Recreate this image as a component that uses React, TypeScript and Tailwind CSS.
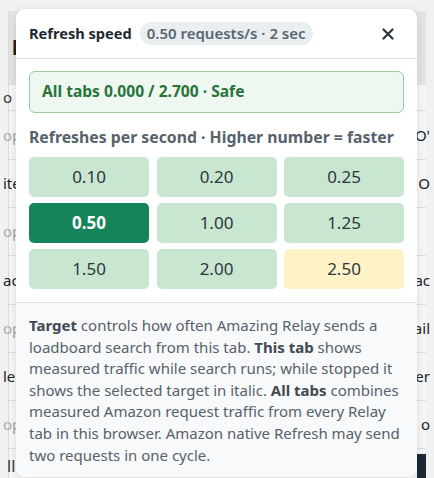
import React from "react";

const rates = ["0.10", "0.20", "0.25", "0.50", "1.00", "1.25", "1.50", "2.00", "2.50"];

function BgRow({ left, right, leftClass = "text-[#222]", rightClass = "text-[#222]", h }: { left: string; right: string; leftClass?: string; rightClass?: string; h: string }) {
  return (
    <div className={`flex items-center justify-between border-b border-[#dcdfe2] ${h}`}>
      <span className={`-ml-[6px] text-[15px] ${leftClass}`}>{left}</span>
      <span className={`mr-[-4px] text-[15px] ${rightClass}`}>{right}</span>
    </div>
  );
}

export default function App() {
  return (
    <div
      className="relative w-[434px] h-[478px] overflow-hidden bg-[#f0f1f2]"
      style={{ fontFamily: '"Noto Sans", "Open Sans", sans-serif' }}
    >
      {/* background page */}
      <div className="ml-[8px] mt-[11px] w-[418px] h-[467px] bg-[#f7f7f8] border-l border-[#d9dcdf] flex flex-col">
        <div className="h-[74px] bg-[#e3e4e5] flex items-center justify-between px-[3px]">
          <span className="text-[20px] font-bold text-[#222]">l</span>
          <span className="text-[20px] font-bold text-[#222]"> </span>
        </div>
        <BgRow left="o s" right="" h="h-[26px]" leftClass="text-[#333] text-[12px]" />
        <BgRow left="op" right="O'" h="h-[49px]" leftClass="text-[#aaa]" />
        <BgRow left="ite" right="O" h="h-[48px]" />
        <BgRow left="op" right="" h="h-[48px]" leftClass="text-[#aaa]" />
        <BgRow left="ac" right="ac" h="h-[49px]" />
        <BgRow left="op" right="ail" h="h-[48px]" leftClass="text-[#aaa]" />
        <BgRow left="le" right="er" h="h-[48px]" />
        <BgRow left="op" right="o" h="h-[48px]" leftClass="text-[#aaa]" />
        <div className="flex-1 flex justify-between items-end">
          <span className="-ml-[2px] text-[16px] text-[#333]">ll</span>
          <span className="w-[9px] h-[24px] bg-[#1b2a33]" />
        </div>
      </div>

      {/* popover */}
      <div className="absolute left-[16px] top-[9px] w-[401px] h-[468px] bg-white rounded-[9px] shadow-[0_2px_10px_rgba(0,0,0,0.12)] overflow-hidden flex flex-col">
        <div className="h-[50px] shrink-0 flex items-center pl-[13px] pr-[23px] border-b border-[#dfe3e6]">
          <span className="text-[14.6px] font-bold text-[#1d2830]">Refresh speed</span>
          <span className="ml-[8px] h-[23px] px-[7px] rounded-full bg-[#e9eef1] text-[15px] font-semibold text-[#5a6670] flex items-center">
            0.50 requests/s · 2 sec
          </span>
          <span className="ml-auto">
            <svg width="12" height="12" viewBox="0 0 12 12" fill="none" stroke="#2a343c" strokeWidth="2.2" strokeLinecap="round">
              <path d="M1.5 1.5 L10.5 10.5 M10.5 1.5 L1.5 10.5" />
            </svg>
          </span>
        </div>

        <div className="px-[13px] pt-[12px] pb-[13px] shrink-0">
          <div className="h-[42px] rounded-[6px] border border-[#99cda3] bg-[#eef7f0] flex items-center px-[12px] text-[15.6px] font-bold text-[#28743a]">
            All tabs 0.000 / 2.700 · Safe
          </div>
          <div className="mt-[13px] text-[15.8px] font-bold text-[#56626c] leading-[22px] whitespace-nowrap">
            Refreshes per second · Higher number = faster
          </div>
          <div className="mt-[9px] grid grid-cols-3 gap-x-[7.5px] gap-y-[6px]">
            {rates.map((r) => {
              const sel = r === "0.50";
              const warn = r === "2.50";
              return (
                <div
                  key={r}
                  className={
                    sel
                      ? "h-[40px] rounded-[5px] bg-[#15845a] text-white font-bold text-[17px] flex items-center justify-center"
                      : warn
                      ? "h-[40px] rounded-[5px] bg-[#fff2c7] text-[#2e3740] text-[17px] flex items-center justify-center"
                      : "h-[40px] rounded-[5px] bg-[#c9e6d1] text-[#2e3740] text-[17px] flex items-center justify-center"
                  }
                >
                  {r}
                </div>
              );
            })}
          </div>
        </div>

        <div className="flex-1 border-t border-[#dfe3e6] bg-[#f8f9fa] px-[13px] pt-[12px] text-[15px] leading-[21.6px] text-[#56616b]">
          <b className="font-bold text-[#3f4a53]">Target</b> controls how often Amazing Relay sends a loadboard search from this tab.{" "}
          <b className="font-bold text-[#3f4a53]">This tab</b> shows measured traffic while search runs; while stopped it shows the selected target in italic.{" "}
          <b className="font-bold text-[#3f4a53]">All tabs</b> combines measured Amazon request traffic from every Relay tab in this browser. Amazon native Refresh may send two requests in one cycle.
        </div>
      </div>
    </div>
  );
}
